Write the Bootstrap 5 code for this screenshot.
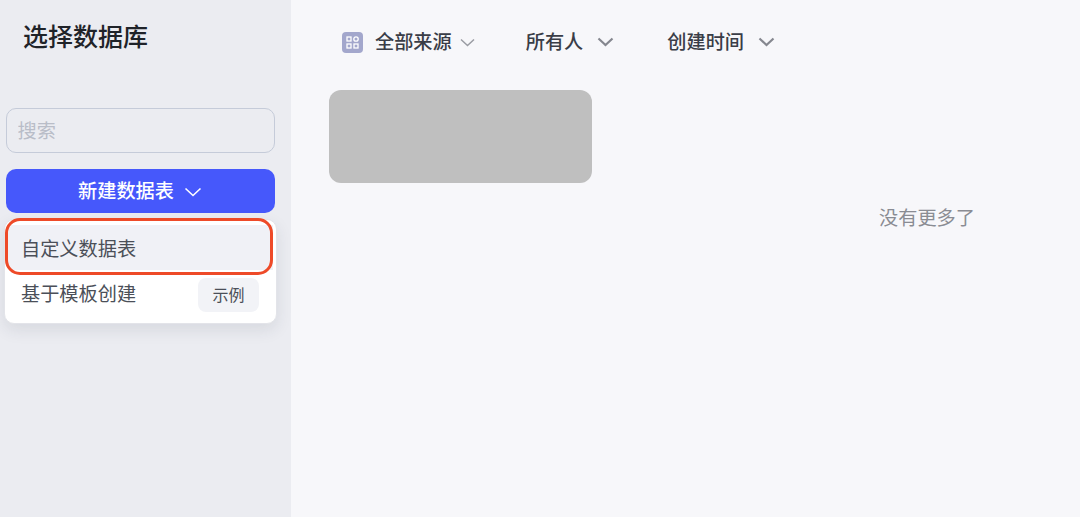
<!doctype html>
<html lang="zh">
<head>
<meta charset="utf-8">
<title>选择数据库</title>
<link href="https://cdn.jsdelivr.net/npm/bootstrap@5.3.0/dist/css/bootstrap.min.css" rel="stylesheet">
<style>
html, body { height: 100%; }
body { font-family: "Inter", "Noto Sans CJK SC", sans-serif; background: #f7f7fa; overflow: hidden; }
.app-shell { height: 517px; }
.side-panel { width: 291px; background: #ebecf1; padding: 0 16px 0 5.5px; flex-shrink: 0; }
.side-title { font-size: 25px; line-height: 32px; font-weight: 500; color: #1f2329; margin: 21px 0 0 17.5px; }
.search-box { height: 45px; margin-top: 55px; width: 269px; background: #ebecf1; border: 1.5px solid #c5cbd9; border-radius: 10px; font-size: 19.2px; padding: 0 11px; color: #333; }
.search-box::placeholder { color: #b9bdc8; }
.search-box:focus { background: #ebecf1; border-color: #c5cbd9; box-shadow: none; }
.new-btn { width: 269px; height: 44px; margin-top: 16px; background: #4658fb; border: 0; border-radius: 10px; color: #fff; font-size: 19.2px; font-weight: 500; line-height: 44px; padding: 0; }
.new-btn:hover { background: #4658fb; color: #fff; }
.new-btn svg { margin-left: 10px; vertical-align: 1px; }
.drop-panel { position: relative; width: 273px; height: 105px; margin: 6px 0 0 -1.5px; background: #fff; border: 1px solid #e3e4e9; border-radius: 10px; box-shadow: 0 6px 16px rgba(40, 45, 70, .1); padding-top: 5px; color: #4b4f58; font-size: 19.2px; }
.drop-item { height: 49px; padding: 0 17px 0 16px; line-height: 44px; }
.drop-item.is-active { height: 45px; padding: 0 0 0 13px; line-height: 48px; background: #f0f1f6; margin: 0 3px; }
.item-label { margin-bottom: 2px; }
.red-mark { position: absolute; left: 0; top: -2px; width: 268px; height: 57px; border: 3px solid #ee4a28; border-radius: 15px; }
.tag-sample { width: 61px; height: 34px; background: #f2f3f7; border-radius: 8px; font-size: 16px; line-height: 34px; text-align: center; color: #4b4f58; }
.main-area { padding: 0 0 0 38px; }
.filter-bar { height: 28px; margin-top: 28px; font-size: 19.2px; font-weight: 500; color: #3a3d47; line-height: 28px; }
.src-icon { width: 21px; height: 21px; margin: 0 12px 0 13px; }
.src-chevron { margin-left: 8px; }
.owner-label { margin-left: 51px; }
.time-label { margin-left: 53px; }
.dark-chevron { margin-left: 14px; }
.blank-card { width: 263px; height: 93px; margin-top: 34px; background: #bfbfbf; border-radius: 12px; }
.no-more { width: 192px; margin: 21px 0 0 502px; text-align: center; font-size: 19.2px; color: #8a8c93; line-height: 28px; }
</style>
</head>
<body>
<div class="app-shell d-flex">
  <div class="side-panel">
    <div class="side-title">选择数据库</div>
    <input class="form-control search-box" type="text" placeholder="搜索">
    <button class="btn new-btn d-block" type="button">新建数据表<svg width="18" height="10" viewBox="0 0 18 10" fill="none"><path d="M1.5 1.5 9 8.5l7.5-7" stroke="#fff" stroke-width="1.6"/></svg></button>
    <div class="drop-panel">
      <div class="drop-item is-active">自定义数据表</div>
      <div class="drop-item d-flex justify-content-between align-items-center">
        <span class="item-label">基于模板创建</span>
        <span class="tag-sample">示例</span>
      </div>
      <div class="red-mark"></div>
    </div>
  </div>
  <div class="main-area flex-grow-1">
    <div class="filter-bar d-flex align-items-center">
      <svg class="src-icon" viewBox="0 0 21 21"><rect width="21" height="21" rx="4" fill="#a3a7cc"/><g fill="none" stroke="#fff" stroke-width="1.3"><rect x="5" y="5" width="4" height="4"/><circle cx="14" cy="7" r="2.2"/><rect x="5" y="12" width="4" height="4"/><rect x="12" y="12" width="4" height="4"/></g></svg>
      <span>全部来源</span>
      <svg class="src-chevron" width="15" height="9" viewBox="0 0 15 9" fill="none"><path d="M1 1.5 7.5 7.5 14 1.5" stroke="#9a9ca3" stroke-width="1.5"/></svg>
      <span class="owner-label">所有人</span>
      <svg class="dark-chevron" width="17" height="10" viewBox="0 0 17 10" fill="none"><path d="M1.5 1.5 8.5 8 15.5 1.5" stroke="#85878f" stroke-width="2.2"/></svg>
      <span class="time-label">创建时间</span>
      <svg class="dark-chevron" width="17" height="10" viewBox="0 0 17 10" fill="none"><path d="M1.5 1.5 8.5 8 15.5 1.5" stroke="#85878f" stroke-width="2.2"/></svg>
    </div>
    <div class="blank-card"></div>
    <div class="no-more">没有更多了</div>
  </div>
</div>
<script src="https://cdn.jsdelivr.net/npm/bootstrap@5.3.0/dist/js/bootstrap.bundle.min.js"></script>
</body>
</html>
